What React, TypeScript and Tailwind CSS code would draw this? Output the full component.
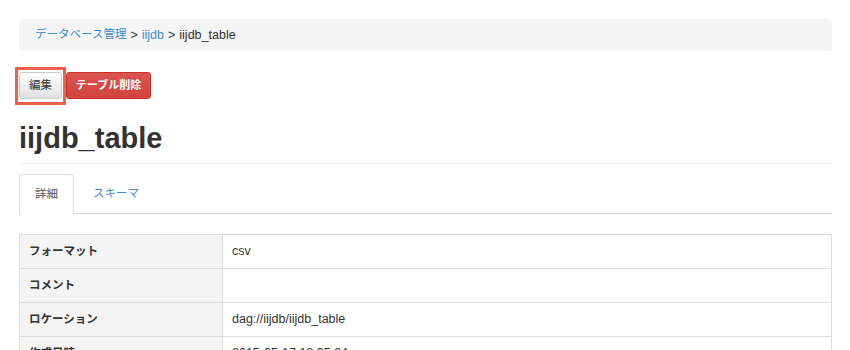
import React from "react";

const font = { fontFamily: '"Liberation Sans", "Noto Sans CJK JP", sans-serif' };

export default function App() {
  const rows: [string, string][] = [
    ["フォーマット", "csv"],
    ["コメント", ""],
    ["ロケーション", "dag://iijdb/iijdb_table"],
    ["作成日時", "2015-05-17 18:35:24"],
  ];
  return (
    <div
      className="w-[850px] h-[350px] overflow-hidden bg-white text-[#333]"
      style={font}
    >
      <div className="relative ml-[19px] w-[813px] pt-[19px]">
        {/* breadcrumb */}
        <div className="flex h-[32px] items-center rounded-[4px] bg-[#f5f5f5] px-[16px] text-[12.5px]">
          <span className="text-[11.5px] text-[#428bca]">データベース管理</span>
          <span className="px-[4px]">&gt;</span>
          <span className="text-[#428bca]">iijdb</span>
          <span className="px-[4px]">&gt;</span>
          <span>iijdb_table</span>
        </div>

        {/* buttons */}
        <div className="mt-[21px] flex gap-[4px]">
          <div className="flex h-[27px] w-[43px] items-center justify-center rounded-[3px] border border-[#ccc] bg-gradient-to-b from-white to-[#e0e0e0] text-[11.5px] text-[#333]">
            編集
          </div>
          <div className="flex h-[27px] w-[85px] items-center justify-center rounded-[3px] border border-[#c9302c] bg-gradient-to-b from-[#d9534f] to-[#d2443f] text-[11px] font-bold text-white">
            テーブル削除
          </div>
        </div>
        {/* highlight box */}
        <div className="pointer-events-none absolute left-[-4px] top-[67px] h-[38px] w-[51px] border-[3px] border-[#f0614b]" />

        {/* heading */}
        <div className="mt-[23px] border-b border-[#eee] pb-[9px]">
          <h1 className="text-[29px] font-bold leading-[32px] text-[#333]">iijdb_table</h1>
        </div>

        {/* tabs */}
        <div className="mt-[10px] flex border-b border-[#ddd] text-[11.5px]">
          <div className="-mb-px flex h-[40px] w-[55px] items-center justify-center rounded-t-[4px] border border-b-0 border-[#ddd] bg-white text-[#555]">
            詳細
          </div>
          <div className="flex h-[39px] items-center px-[19px] text-[#428bca]">スキーマ</div>
        </div>

        {/* table */}
        <div className="mt-[20px] border-l border-r border-t border-[#ddd] text-[12.5px]">
          {rows.map(([k, v]) => (
            <div key={k} className="flex h-[34px] border-b border-[#ddd]">
              <div className="flex w-[203px] items-center border-r border-[#ddd] bg-[#f4f4f4] pl-[9px] text-[11.5px] font-bold">
                {k}
              </div>
              <div className="flex flex-1 items-center pl-[9px]">{v}</div>
            </div>
          ))}
        </div>
      </div>
    </div>
  );
}
